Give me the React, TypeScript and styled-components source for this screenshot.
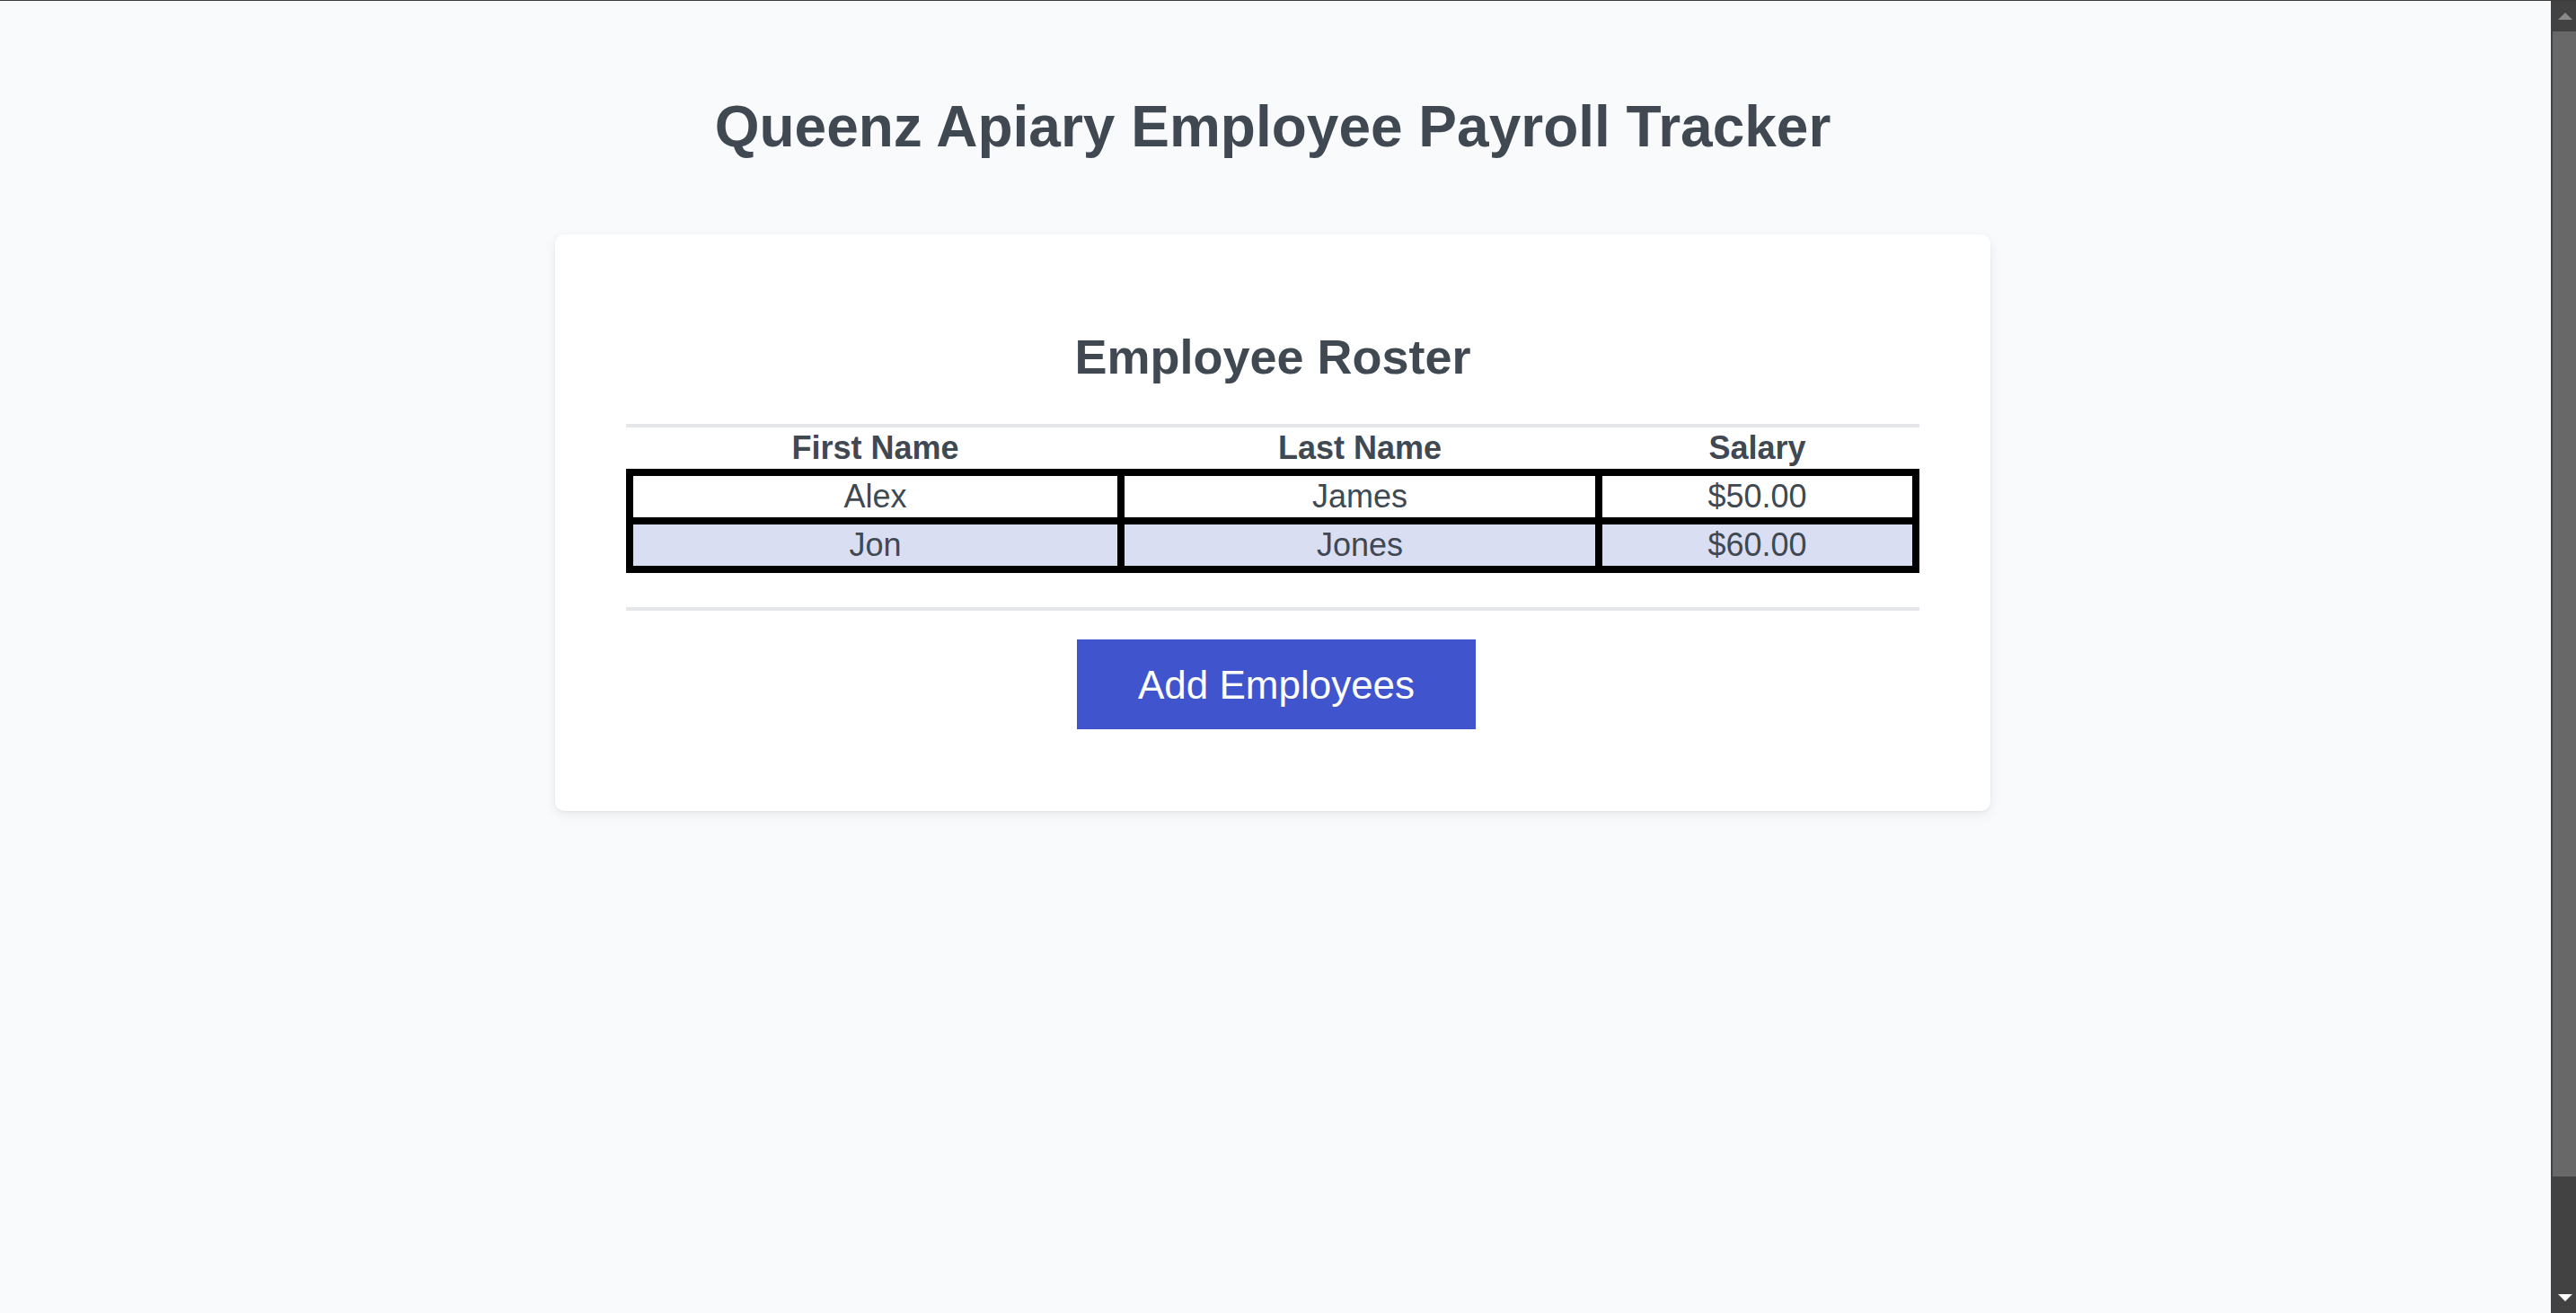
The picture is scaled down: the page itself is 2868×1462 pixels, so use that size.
import React from "react";
import styled, { createGlobalStyle } from "styled-components";

const GlobalStyle = createGlobalStyle`
  html, body {
    margin: 0;
    padding: 0;
    background: #f9fafb;
    overflow: hidden;
  }
  body {
    font-family: "Liberation Sans", Arial, Helvetica, sans-serif;
    color: #404852;
  }
`;

const Shell = styled.div`
  box-sizing: border-box;
  height: 100vh;
  border-top: 1px solid #3c3c3c;
  display: flex;
  align-items: stretch;
`;

const Page = styled.main`
  flex: 1;
  min-width: 0;
  padding: 103px 6px 0 0;
  display: flex;
  flex-direction: column;
  align-items: center;
  overflow: hidden;
`;

const ScrollRail = styled.div`
  width: 28px;
  flex: none;
  background: #424242;
  display: flex;
  flex-direction: column;
`;

const ScrollButton = styled.div`
  height: 34px;
  flex: none;
  display: flex;
  align-items: center;
  justify-content: center;
  padding-left: 4px;
`;

const ScrollThumb = styled.div`
  height: 1275px;
  flex: none;
  margin-left: 2px;
  background: #686868;
`;

const ScrollTrack = styled.div`
  flex: 1;
`;

const Title = styled.h1`
  margin: 0;
  font-size: 64px;
  font-weight: 700;
  line-height: normal;
  color: #404852;
  text-align: center;
`;

const Card = styled.section`
  box-sizing: border-box;
  width: 1598px;
  margin-top: 83px;
  padding: 80px 79px 91px;
  background: #ffffff;
  border-radius: 10px;
  box-shadow: 0 4px 14px rgba(0, 0, 0, 0.07), 0 1px 3px rgba(0, 0, 0, 0.05);
  display: flex;
  flex-direction: column;
  align-items: stretch;
`;

const CardTitle = styled.h2`
  margin: 25px 0 44px;
  font-size: 54px;
  font-weight: 700;
  line-height: normal;
  text-align: center;
  color: #404852;
`;

const TableWrap = styled.div`
  border-top: 4px solid #e5e7eb;
  border-bottom: 4px solid #e5e7eb;
  padding-bottom: 38px;
`;

const Table = styled.table`
  width: 100%;
  border-collapse: collapse;
  font-size: 36px;
  color: #404852;
`;

const HeadCell = styled.th`
  padding: 2px;
  font-weight: 700;
  line-height: 42px;
  text-align: center;
`;

const Row = styled.tr<{ $alt?: boolean }>`
  background: ${(p) => (p.$alt ? "#d9def3" : "#ffffff")};
`;

const Cell = styled.td`
  border: 8px solid #000000;
  padding: 2px;
  line-height: 42px;
  text-align: center;
`;

const ButtonRow = styled.div`
  display: flex;
  justify-content: center;
  margin-top: 32px;
  padding-left: 8px;
`;

const AddButton = styled.button`
  font-family: "Liberation Sans", Arial, Helvetica, sans-serif;
  font-size: 44px;
  line-height: 50px;
  padding: 26px 68px 24px;
  background: #4055cd;
  color: #ffffff;
  border: none;
  border-radius: 0;
  cursor: pointer;
`;

const Arrow = ({ up, color }: { up?: boolean; color: string }) => (
  <svg width="16" height="8" viewBox="0 0 16 8">
    <path d={up ? "M0 8 L8 0 L16 8 Z" : "M0 0 L16 0 L8 8 Z"} fill={color} />
  </svg>
);

const employees = [
  { first: "Alex", last: "James", salary: "$50.00" },
  { first: "Jon", last: "Jones", salary: "$60.00" },
];

export default function App() {
  return (
    <>
      <GlobalStyle />
      <Shell>
        <Page>
          <Title>Queenz Apiary Employee Payroll Tracker</Title>
          <Card>
            <CardTitle>Employee Roster</CardTitle>
            <TableWrap>
              <Table>
                <colgroup>
                  <col style={{ width: "38.2%" }} />
                  <col style={{ width: "37.15%" }} />
                  <col style={{ width: "24.65%" }} />
                </colgroup>
                <thead>
                  <tr>
                    <HeadCell>First Name</HeadCell>
                    <HeadCell>Last Name</HeadCell>
                    <HeadCell>Salary</HeadCell>
                  </tr>
                </thead>
                <tbody>
                  {employees.map((e, i) => (
                    <Row key={e.first} $alt={i % 2 === 1}>
                      <Cell>{e.first}</Cell>
                      <Cell>{e.last}</Cell>
                      <Cell>{e.salary}</Cell>
                    </Row>
                  ))}
                </tbody>
              </Table>
            </TableWrap>
            <ButtonRow>
              <AddButton>Add Employees</AddButton>
            </ButtonRow>
          </Card>
        </Page>
        <ScrollRail>
          <ScrollButton>
            <Arrow up color="#8a8a8a" />
          </ScrollButton>
          <ScrollThumb />
          <ScrollTrack />
          <ScrollButton>
            <Arrow color="#ffffff" />
          </ScrollButton>
        </ScrollRail>
      </Shell>
    </>
  );
}
